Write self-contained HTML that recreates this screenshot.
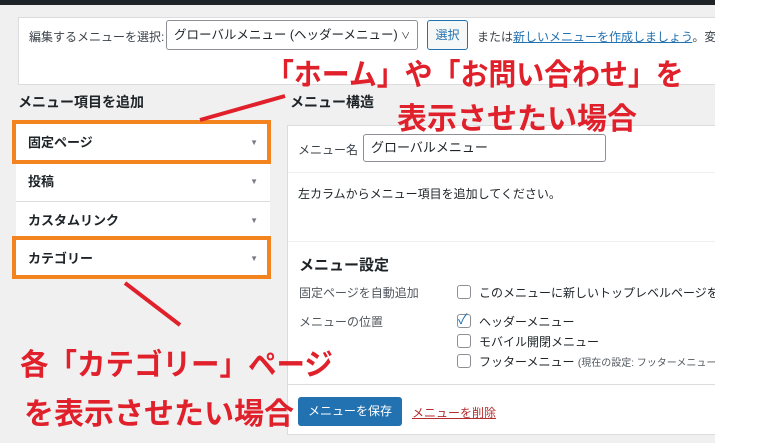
<!DOCTYPE html>
<html><head><meta charset="utf-8"><style>
body{margin:0;width:780px;height:443px;overflow:hidden;background:#fff;font-family:"Liberation Sans","Noto Sans CJK JP",sans-serif;color:#1d2327;position:relative}
.bg{position:absolute;left:0;top:0;width:715px;height:443px;background:#f0f0f1;overflow:hidden}
.top{position:absolute;left:0;top:0;width:715px;height:5px;background:#1d2327}
.a{position:absolute}
.box{position:absolute;background:#fff;border:1px solid #dcdcde;box-sizing:border-box}
.s13{font-size:12px;white-space:nowrap}
.item{position:absolute;left:16px;width:254px;height:38px;background:#fff;border-bottom:1px solid #dcdcde;font-size:13px;font-weight:bold;line-height:38px;text-indent:12px}
.item:after{content:"▼";position:absolute;right:12px;top:0;font-size:8px;color:#787c82}
.or{position:absolute;border:4px solid #f3831f}
.red{position:absolute;color:#e0202a;font-size:30px;font-weight:bold;white-space:nowrap;transform-origin:0 0}
.cb{position:absolute;width:14px;height:14px;border:1px solid #8c8f94;border-radius:3px;background:#fff;box-sizing:border-box}
</style></head><body>
<div class="bg">
<div class="top"></div>
<div class="box" style="left:18px;top:17px;width:710px;height:68px"></div>
<div class="a s13" style="left:29px;top:28px;color:#3c434a">編集するメニューを選択:</div>
<div class="box" style="left:166px;top:20px;width:252px;height:30px;border-color:#8c8f94;border-radius:3px;font-size:12.5px;line-height:28px;padding-left:7px;white-space:nowrap">グローバルメニュー (ヘッダーメニュー) <span style="font-size:9px">∨</span></div>
<div class="box" style="left:427px;top:20px;width:41px;height:30px;background:#f6f7f7;border-color:#2271b1;border-radius:3px;font-size:12px;line-height:28px;text-align:center;color:#2271b1">選択</div>
<div class="a s13" style="left:477px;top:28px;color:#3c434a">または<span style="color:#2271b1;text-decoration:underline">新しいメニューを作成しましょう</span>。変更</div>
<div class="a" style="left:18px;top:92px;font-size:14px;font-weight:bold">メニュー項目を追加</div>
<div class="a" style="left:290px;top:92px;font-size:14px;font-weight:bold">メニュー構造</div>
<div class="item" style="top:124px">固定ページ</div>
<div class="item" style="top:163px">投稿</div>
<div class="item" style="top:202px">カスタムリンク</div>
<div class="item" style="top:240px">カテゴリー</div>
<div class="or" style="left:12px;top:120px;width:251px;height:36px"></div>
<div class="or" style="left:12px;top:236px;width:251px;height:35px"></div>
<div class="box" style="left:287px;top:125px;width:440px;height:310px"></div>
<div class="a s13" style="left:298px;top:141px;color:#3c434a">メニュー名</div>
<div class="box" style="left:363px;top:134px;width:243px;height:28px;border-color:#8c8f94;border-radius:3px;font-size:13px;line-height:26px;padding-left:7px">グローバルメニュー</div>
<div class="a" style="left:288px;top:172px;width:427px;height:1px;background:#f0f0f1"></div>
<div class="a s13" style="left:298px;top:185px">左カラムからメニュー項目を追加してください。</div>
<div class="a" style="left:288px;top:241px;width:427px;height:1px;background:#f0f0f1"></div>
<div class="a" style="left:299px;top:254px;font-size:15px;font-weight:bold">メニュー設定</div>
<div class="a s13" style="left:299px;top:284px;color:#50575e">固定ページを自動追加</div>
<div class="a s13" style="left:299px;top:313px;color:#50575e">メニューの位置</div>
<div class="cb" style="left:457px;top:285px"></div><div class="a s13" style="left:479px;top:284px">このメニューに新しいトップレベルページを自</div>
<div class="cb" style="left:457px;top:314px"></div><div class="a" style="left:458px;top:309px;color:#2271b1;font-size:14px">✓</div><div class="a s13" style="left:479px;top:313px">ヘッダーメニュー</div>
<div class="cb" style="left:457px;top:334px"></div><div class="a s13" style="left:479px;top:333px">モバイル開閉メニュー</div>
<div class="cb" style="left:457px;top:354px"></div><div class="a s13" style="left:479px;top:353px">フッターメニュー <span style="font-size:10px;color:#50575e">(現在の設定: フッターメニュー)</span></div>
<div class="a" style="left:288px;top:384px;width:427px;height:1px;background:#dcdcde"></div>
<div class="a" style="left:298px;top:397px;width:104px;height:29px;background:#2271b1;border-radius:3px;color:#fff;font-size:12px;line-height:29px;text-align:center">メニューを保存</div>
<div class="a s13" style="left:412px;top:404px;color:#b32d2e;text-decoration:underline">メニューを削除</div>
</div>
<svg class="a" style="left:0;top:0" width="780" height="443"><line x1="200" y1="120" x2="285" y2="96" stroke="#e0202a" stroke-width="4"/><line x1="125" y1="283" x2="180" y2="325" stroke="#e0202a" stroke-width="4"/></svg>
<div class="red" style="left:266px;top:50px;transform:scaleX(0.93)">「ホーム」や「お問い合わせ」を</div>
<div class="red" style="left:397px;top:94px">表示させたい場合</div>
<div class="red" style="left:20px;top:340px;transform:scaleX(0.95)">各「カテゴリー」ページ</div>
<div class="red" style="left:24px;top:389px">を表示させたい場合</div>
</body></html>
